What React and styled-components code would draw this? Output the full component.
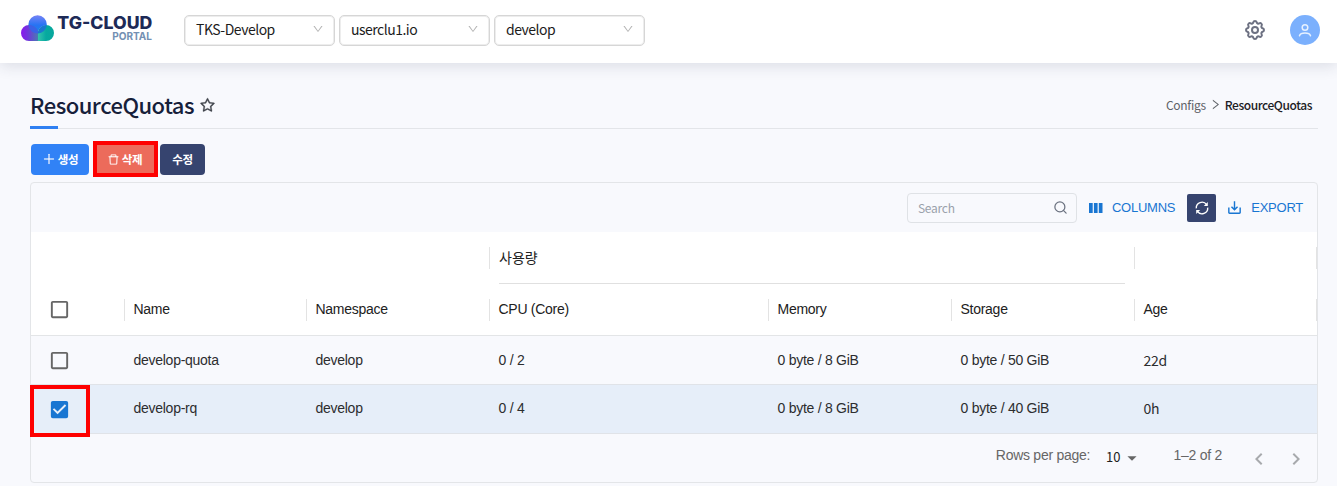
import React from "react";
import styled, { createGlobalStyle } from "styled-components";
import {
  AiOutlineDelete,
  AiOutlineDown,
  AiOutlinePlus,
  AiOutlineRight,
  AiOutlineStar,
} from "react-icons/ai";
import {
  MdArrowDropDown,
  MdCheckBox,
  MdCheckBoxOutlineBlank,
  MdKeyboardArrowLeft,
  MdKeyboardArrowRight,
  MdSaveAlt,
} from "react-icons/md";
import { FiSearch } from "react-icons/fi";
import { TbSettings } from "react-icons/tb";

const uiFont = `"Noto Sans CJK KR", "Noto Sans", sans-serif`;
const gridFont = `"Liberation Sans", "Noto Sans CJK KR", sans-serif`;

const GlobalStyle = createGlobalStyle`
  * { box-sizing: border-box; }
  body {
    margin: 0;
    background: #f8f9fd;
    font-family: ${uiFont};
    color: #212121;
    overflow: hidden;
  }
  button { font: inherit; border: 0; padding: 0; background: none; }
  svg { display: block; flex: none; }
`;

const Page = styled.div`
  width: 1337px;
  height: 486px;
  overflow: hidden;
`;

const Header = styled.header`
  position: relative;
  display: flex;
  align-items: center;
  height: 63px;
  padding: 0 17px 3px 20px;
  background: #fff;
  box-shadow: 0 3px 14px rgba(40, 50, 75, 0.14);
`;

const Logo = styled.svg`
  margin-right: 28px;
  overflow: visible;
`;

const Selects = styled.div`
  display: flex;
  gap: 4px;
`;

const Select = styled.div`
  display: flex;
  align-items: center;
  justify-content: space-between;
  width: 151px;
  height: 31px;
  padding: 0 10px 2px 11px;
  border: 1px solid #d6d6d6;
  border-radius: 5px;
  box-shadow: inset 0 0 0 1px #ededed;
  font-size: 14px;
  letter-spacing: -0.5px;
  color: #1c1c1c;
  svg { color: #b4b4b4; }
`;

const HeaderActions = styled.div`
  display: flex;
  align-items: center;
  gap: 23px;
  margin-left: auto;
  color: #6d7182;
`;

const Avatar = styled.div`
  display: grid;
  place-items: center;
  width: 30px;
  height: 30px;
  border-radius: 50%;
  background: #7bb0fd;
`;

const Main = styled.main`
  padding: 26px 19px 0 30px;
`;

const TitleBar = styled.div`
  display: flex;
  align-items: center;
  justify-content: space-between;
  height: 40px;
  padding: 0 6px 5px 0;
  border-bottom: 1px solid #e3e5e9;
`;

const Title = styled.h1`
  display: flex;
  align-items: center;
  gap: 5px;
  height: 40px;
  margin: 0 0 -5px;
  padding-bottom: 10px;
  font-size: 22px;
  line-height: 30px;
  font-weight: 500;
  letter-spacing: -0.5px;
  color: #16203a;
  background: linear-gradient(#2f80f2, #2f80f2) 0 100% / 28px 3px no-repeat;
  svg { margin-top: 3px; color: #3f434b; stroke: #3f434b; stroke-width: 18px; }
`;

const Breadcrumb = styled.nav`
  display: flex;
  align-items: center;
  gap: 3px;
  padding-bottom: 3px;
  font-size: 12px;
  letter-spacing: -0.3px;
  color: #5f6368;
  strong { font-weight: 500; letter-spacing: -0.43px; color: #1c2024; }
`;

const ActionBar = styled.div`
  display: flex;
  gap: 5px;
  height: 53px;
  padding: 15px 0 0 1px;
`;

const tones = { create: "#3182f6", remove: "#ec6b5b", edit: "#36446f" };

const ActionButton = styled.button`
  position: relative;
  display: flex;
  align-items: center;
  justify-content: center;
  gap: 2px;
  width: ${(p) => p.$width}px;
  height: 31px;
  padding-bottom: 1px;
  border-radius: 4px;
  background: ${(p) => tones[p.$tone]};
  color: #fff;
  font-size: 11.5px;
  font-weight: 600;
  letter-spacing: -0.3px;
  svg { stroke: currentColor; stroke-width: 10px; }
`;

const Highlight = styled.span`
  position: absolute;
  inset: ${(p) => p.$inset};
  border: 4px solid #fe0000;
  pointer-events: none;
`;

const Panel = styled.section`
  height: 301px;
  border: 1px solid #e3e5e8;
  border-radius: 4px;
  font-family: ${gridFont};
  font-size: 14px;
  letter-spacing: -0.27px;
`;

const Toolbar = styled.div`
  display: flex;
  align-items: center;
  justify-content: flex-end;
  height: 49px;
  padding-right: 14px;
`;

const SearchBox = styled.div`
  display: flex;
  align-items: center;
  justify-content: space-between;
  width: 170px;
  height: 30px;
  margin-right: 11px;
  padding: 0 8px 0 10px;
  border: 1px solid #dfe2e6;
  border-radius: 4px;
  font-family: ${uiFont};
  font-size: 12px;
  letter-spacing: -0.25px;
  color: #9aa1ab;
  svg { color: #6b7280; margin-bottom: 1px; }
`;

const ToolButton = styled.button`
  display: flex;
  align-items: center;
  gap: 8px;
  color: #1976d2;
  font-size: 13px;
  letter-spacing: -0.24px;
`;

const RefreshButton = styled.button`
  display: grid;
  place-items: center;
  width: 29px;
  height: 28px;
  margin: 0 10px 0 12px;
  border-radius: 2px;
  background: #36446f;
  color: #fff;
`;

const columns = "93px 182px 183px 279px 183px 183px 1fr";

const GridHead = styled.div`
  background: #fff;
  border-bottom: 1px solid #e3e5e7;
`;

const GroupRow = styled.div`
  display: grid;
  grid-template-columns: 458px 645px 1fr;
  height: 52px;
`;

const HeadRow = styled.div`
  display: grid;
  grid-template-columns: ${columns};
  height: 51px;
`;

const HeadCell = styled.div`
  display: flex;
  align-items: center;
  padding: 0 0 2px ${(p) => (p.$group ? 10 : 9.5)}px;
  color: #212121;
  background:
    linear-gradient(#e3e3e3, #e3e3e3) 0 50% / ${(p) => (p.$first ? 0 : 1)}px 22px no-repeat,
    linear-gradient(#e3e3e3, #e3e3e3) 100% 50% / ${(p) => (p.$last ? 1 : 0)}px 22px no-repeat;
`;

const GroupLabel = styled.div`
  display: flex;
  align-items: center;
  width: 626px;
  height: 52px;
  margin-bottom: -2px;
  padding-bottom: 2px;
  border-bottom: 1px solid #e0e0e0;
  letter-spacing: 0;
`;

const Row = styled.div`
  position: relative;
  display: grid;
  grid-template-columns: ${columns};
  height: 49px;
  border-bottom: 1px solid #e0e3e8;
  background: ${(p) => (p.$selected ? "#e6eef9" : "transparent")};
`;

const Cell = styled.div`
  display: flex;
  align-items: center;
  padding: 0 0 ${(p) => (p.$selected ? 2 : 1)}px 9.5px;
  color: #2c2d2f;
  font-family: ${(p) => (p.$ui ? uiFont : gridFont)};
`;

const CheckCell = styled.div`
  display: flex;
  align-items: center;
  padding-left: 17px;
  color: ${(p) => (p.$checked ? "#1976d2" : "#666")};
`;

const Footer = styled.div`
  display: flex;
  align-items: center;
  height: 49px;
  padding: 0 9px 7px 0;
  justify-content: flex-end;
  color: #666;
`;

const PageSize = styled.span`
  display: flex;
  align-items: center;
  margin: 3px 31px 0 16px;
  color: #212121;
  font-family: ${uiFont};
  font-size: 13px;
  letter-spacing: 0;
  svg { margin: 3px 0 0 0; color: #666; }
`;

const Pager = styled.div`
  display: flex;
  gap: 13px;
  margin: 7px 0 0 25px;
  color: #a8aaad;
`;

const rows = [
  { name: "develop-quota", ns: "develop", cpu: "0 / 2", memory: "0 byte / 8 GiB", storage: "0 byte / 50 GiB", age: "22d" },
  { name: "develop-rq", ns: "develop", cpu: "0 / 4", memory: "0 byte / 8 GiB", storage: "0 byte / 40 GiB", age: "0h", selected: true },
];

function CloudLogo() {
  return (
    <Logo width="136" height="32" viewBox="0 0 136 32" role="img" aria-label="TG-Cloud Portal">
      <defs>
        <linearGradient id="top" x1="0" y1="0" x2="0" y2="1">
          <stop offset="0" stopColor="#7684f6" />
          <stop offset="0.6" stopColor="#2673f3" />
          <stop offset="1" stopColor="#1c80ea" />
        </linearGradient>
        <linearGradient id="left" x1="0" y1="0" x2="1" y2="0">
          <stop offset="0" stopColor="#8a16ee" />
          <stop offset="0.4" stopColor="#7036dc" />
          <stop offset="1" stopColor="#4a7bb2" />
        </linearGradient>
        <linearGradient id="right" x1="0" y1="0" x2="1" y2="0">
          <stop offset="0" stopColor="#35c4ae" />
          <stop offset="0.5" stopColor="#06a9a0" />
          <stop offset="1" stopColor="#08a79d" />
        </linearGradient>
      </defs>
      <path d="M9 11a8 8 0 0 0 0 16h9V15a9 9 0 0 0-9-4z" fill="url(#left)" />
      <path d="M26 11a8 8 0 0 1 0 16h-8V18a8 8 0 0 1 8-7z" fill="url(#right)" />
      <path d="M8.4 10.5a9.2 9.2 0 0 1 18.4 0l-.1.7a9 9 0 0 0-8.7 6.5a9 9 0 0 0-9.4-6.5z" fill="url(#top)" />
      <path d="M8.6 11.2a9 9 0 0 1 9.4 6.5v1.7A9.2 9.2 0 0 1 8.6 11.2z" fill="#3a62e6" />
      <path d="M26.7 11.2a9 9 0 0 0-8.7 6.5v1.7A9.2 9.2 0 0 0 26.7 11.2z" fill="#1a78cf" />
      <text x="37.3" y="14.7" textLength="95" lengthAdjust="spacingAndGlyphs" fontFamily="Inter, sans-serif" fontWeight="800" fontSize="17" fill="#1d2a57">TG-CLOUD</text>
      <text x="92.3" y="26" textLength="39.7" lengthAdjust="spacingAndGlyphs" fontFamily="Inter, sans-serif" fontWeight="700" fontSize="10.6" fill="#7390b3">PORTAL</text>
    </Logo>
  );
}

function UserIcon() {
  return (
    <svg width="14" height="14" viewBox="0 0 14 14" fill="none" stroke="#e6f1ff" strokeWidth="1.5" strokeLinecap="round">
      <circle cx="7" cy="4.5" r="2.8" />
      <path d="M1.5 12.8c.6-1.9 2.6-2.7 5.5-2.7s4.9.8 5.5 2.7" />
    </svg>
  );
}

function RefreshIcon() {
  return (
    <svg width="16" height="16" viewBox="0 0 16 16" fill="none" stroke="#fff" strokeWidth="1.4">
      <path d="M2.3 8.4A5.7 5.7 0 0 1 12.6 4.6" />
      <path d="M13.7 7.6A5.7 5.7 0 0 1 3.4 11.4" />
      <path d="M13.8 2v4H9.8z" fill="#fff" stroke="none" />
      <path d="M2.2 14V10h4z" fill="#fff" stroke="none" />
    </svg>
  );
}

function ColumnsIcon() {
  return (
    <svg width="16" height="16" viewBox="0 0 16 16" fill="#1976d2">
      <rect x="1" y="3" width="3.7" height="10" />
      <rect x="5.9" y="3" width="3.7" height="10" />
      <rect x="10.8" y="3" width="3.7" height="10" />
    </svg>
  );
}

export default function App() {
  return (
    <Page>
      <GlobalStyle />
      <Header>
        <CloudLogo />
        <Selects>
          {["TKS-Develop", "userclu1.io", "develop"].map((label) => (
            <Select key={label}>
              {label}
              <AiOutlineDown size={12} />
            </Select>
          ))}
        </Selects>
        <HeaderActions>
          <TbSettings size={24} />
          <Avatar>
            <UserIcon />
          </Avatar>
        </HeaderActions>
      </Header>
      <Main>
        <TitleBar>
          <Title>
            ResourceQuotas <AiOutlineStar size={17} />
          </Title>
          <Breadcrumb>
            Configs <AiOutlineRight size={13} /> <strong>ResourceQuotas</strong>
          </Breadcrumb>
        </TitleBar>
        <ActionBar>
          <ActionButton $tone="create" $width={58}>
            <AiOutlinePlus size={14} />생성
          </ActionButton>
          <ActionButton $tone="remove" $width={61}>
            <AiOutlineDelete size={13} />삭제
            <Highlight $inset="-3px -3px -2px -1px" />
          </ActionButton>
          <ActionButton $tone="edit" $width={45}>수정</ActionButton>
        </ActionBar>
        <Panel>
          <Toolbar>
            <SearchBox>
              Search <FiSearch size={15} />
            </SearchBox>
            <ToolButton>
              <ColumnsIcon /> COLUMNS
            </ToolButton>
            <RefreshButton>
              <RefreshIcon />
            </RefreshButton>
            <ToolButton>
              <MdSaveAlt size={17} /> EXPORT
            </ToolButton>
          </Toolbar>
          <GridHead>
            <GroupRow>
              <HeadCell $first />
              <HeadCell $group>
                <GroupLabel>사용량</GroupLabel>
              </HeadCell>
              <HeadCell $last />
            </GroupRow>
            <HeadRow>
              <CheckCell>
                <MdCheckBoxOutlineBlank size={23} />
              </CheckCell>
              {["Name", "Namespace", "CPU (Core)", "Memory", "Storage", "Age"].map((label) => (
                <HeadCell key={label} $last={label === "Age"}>{label}</HeadCell>
              ))}
            </HeadRow>
          </GridHead>
          {rows.map((row) => (
            <Row key={row.name} $selected={row.selected}>
              <CheckCell $checked={row.selected}>
                {row.selected ? <MdCheckBox size={23} /> : <MdCheckBoxOutlineBlank size={23} />}
              </CheckCell>
              <Cell $selected={row.selected}>{row.name}</Cell>
              <Cell $selected={row.selected}>{row.ns}</Cell>
              <Cell $selected={row.selected}>{row.cpu}</Cell>
              <Cell $selected={row.selected}>{row.memory}</Cell>
              <Cell $selected={row.selected}>{row.storage}</Cell>
              <Cell $selected={row.selected} $ui>{row.age}</Cell>
              {row.selected && <Highlight $inset="0 1227px -4px -1px" />}
            </Row>
          ))}
          <Footer>
            Rows per page:
            <PageSize>
              10 <MdArrowDropDown size={22} />
            </PageSize>
            1–2 of 2
            <Pager>
              <MdKeyboardArrowLeft size={24} />
              <MdKeyboardArrowRight size={24} />
            </Pager>
          </Footer>
        </Panel>
      </Main>
    </Page>
  );
}
